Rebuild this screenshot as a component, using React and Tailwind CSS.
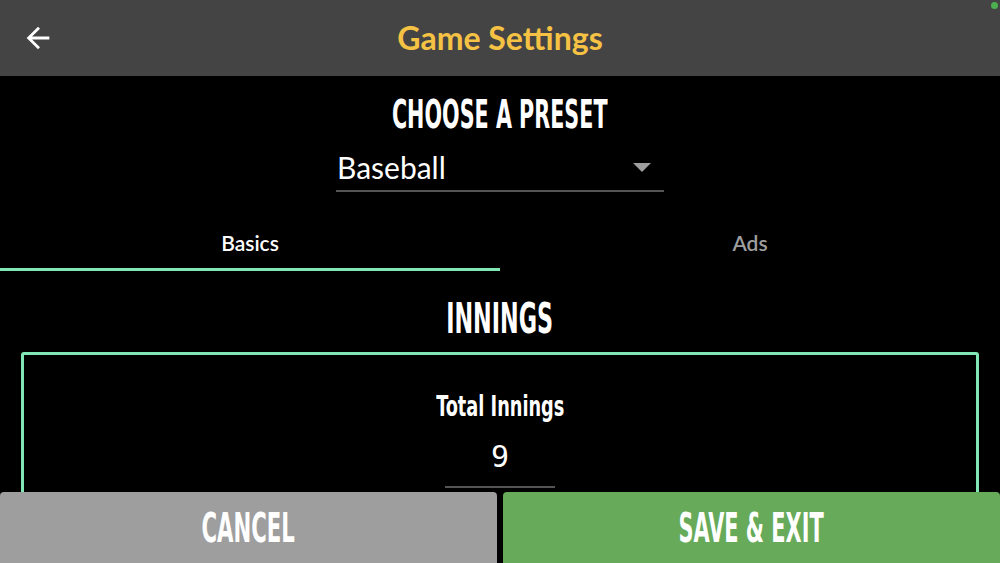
import { useState } from 'react';
import { MdArrowBack } from 'react-icons/md';

const narrow = "font-['Liberation_Sans_Narrow','DejaVu_Sans_Condensed','Liberation_Sans',sans-serif]";

export default function App() {
  const [tab, setTab] = useState('basics');
  const [innings, setInnings] = useState('9');

  return (
    <div className="relative flex h-screen w-full flex-col overflow-hidden bg-black font-['Lato','Noto_Sans',sans-serif] text-white">
      {/* status dot */}
      <span className="absolute right-[2px] top-[2px] h-[7px] w-[7px] rounded-full bg-[#4caf50]" />

      {/* header */}
      <header className="flex h-[76px] shrink-0 items-center bg-[#444444] px-[21px]">
        <button className="flex h-[34px] w-[34px] items-center justify-center text-white">
          <MdArrowBack size={34} />
        </button>
        <h1 className="flex-1 pr-[34px] text-center text-[32px] font-bold text-[#f6c244]">Game Settings</h1>
      </header>

      <main className="flex min-h-0 flex-1 flex-col items-center overflow-hidden">
        <h2 className={`${narrow} mt-[19px] scale-x-[0.59] text-[39px] font-bold leading-none`}>CHOOSE A PRESET</h2>

        <div className="mt-[16px] flex w-[328px] items-center justify-between border-b-2 border-[#555555] pb-[6px]">
          <span className="pl-[1px] text-[30px] leading-[34px]">Baseball</span>
          <svg width="18" height="9" viewBox="0 0 18 9" className="mr-[13px]">
            <polygon points="0,0 18,0 9,9" fill="#9e9e9e" />
          </svg>
        </div>

        {/* tabs */}
        <div className="mt-[29px] grid w-full shrink-0 grid-cols-2">
          <button
            onClick={() => setTab('basics')}
            className={`h-[50px] border-b-[3px] pb-[3px] text-[21px] font-semibold ${tab === 'basics' ? 'border-[#80e6b4] text-white' : 'border-transparent text-[#9e9e9e]'}`}
          >
            Basics
          </button>
          <button
            onClick={() => setTab('ads')}
            className={`h-[50px] border-b-[3px] pb-[3px] text-[21px] font-semibold ${tab === 'ads' ? 'border-[#80e6b4] text-white' : 'border-transparent text-[#9e9e9e]'}`}
          >
            Ads
          </button>
        </div>

        <h2 className={`${narrow} mt-[27px] scale-x-[0.59] text-[42px] font-bold leading-none`}>INNINGS</h2>

        <section className="mx-[21px] mt-[12px] flex h-[320px] w-[958px] shrink-0 flex-col items-center rounded-[3px] border-[3px] border-[#80e6b4]">
          <div className={`${narrow} mt-[37px] scale-x-[0.68] text-[29px] font-bold leading-none`}>Total Innings</div>
          <input
            value={innings}
            onChange={(e) => setInnings(e.target.value)}
            className="mt-[18px] w-[110px] border-b-2 border-[#555555] bg-transparent pb-[12px] text-center font-['DejaVu_Sans_Mono',monospace] text-[30px] font-light leading-none text-white outline-none"
          />
        </section>
      </main>

      {/* footer buttons */}
      <footer className="flex h-[71px] shrink-0 gap-[6px]">
        <button className="flex flex-1 items-center justify-center rounded-t-[4px] bg-[#9e9e9e]">
          <span className={`${narrow} scale-x-[0.59] text-[40px] font-bold leading-none`}>CANCEL</span>
        </button>
        <button className="flex flex-1 items-center justify-center rounded-t-[4px] bg-[#66aa5a]">
          <span className={`${narrow} scale-x-[0.58] text-[40px] font-bold leading-none`}>SAVE &amp; EXIT</span>
        </button>
      </footer>
    </div>
  );
}
